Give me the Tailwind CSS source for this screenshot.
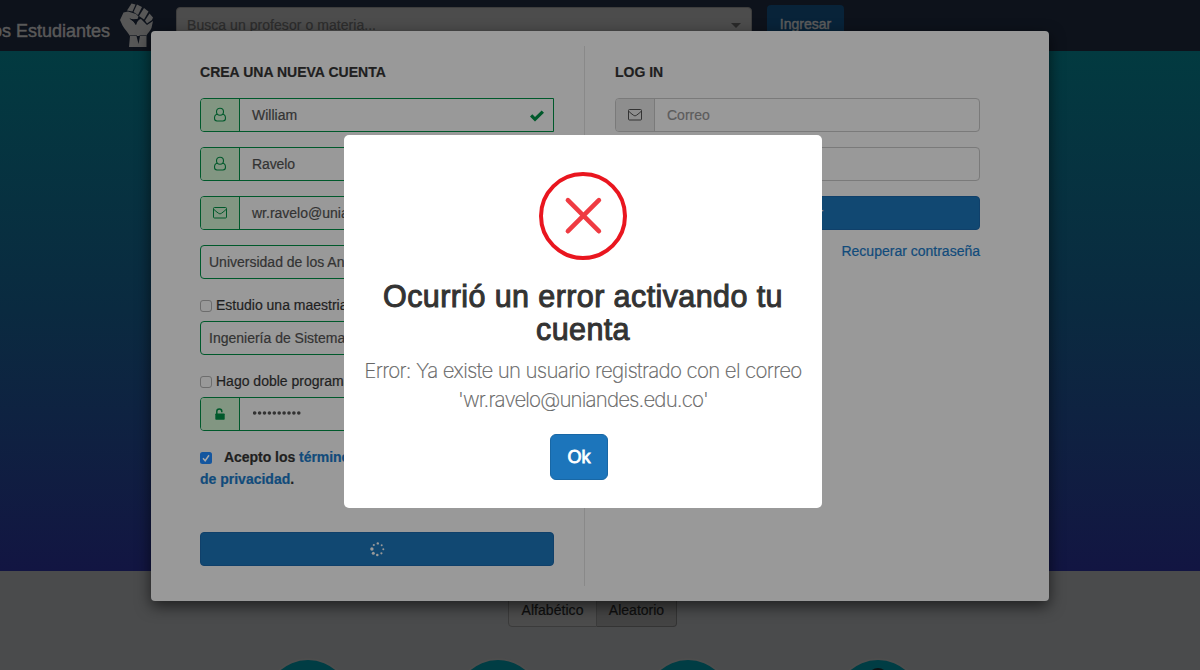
<!DOCTYPE html>
<html lang="es">
<head>
<meta charset="utf-8">
<title>Los Estudiantes</title>
<script src="https://cdn.jsdelivr.net/npm/@tailwindcss/browser@4"></script>
</head>
<body class="relative h-[670px] w-[1200px] overflow-hidden bg-[#4a4b4c] font-['Liberation_Sans',Arial,sans-serif] text-sm leading-5 text-[#1f1f1f] [-webkit-text-stroke:.2px]">

<svg class="hidden">
  <symbol id="user" viewBox="0 0 14 16"><path d="M4.300 7.300C2 7.600 1.500 9.400 1.500 11.300c0 1.700 1 2.700 2.500 2.700h6c1.500 0 2.500-1 2.500-2.700 0-1.900-.5-3.700-2.800-4" fill="none" stroke="currentColor" stroke-width="1.100"/><circle cx="7" cy="4.700" r="3.500" fill="none" stroke="currentColor" stroke-width="1.100"/></symbol>
  <symbol id="mail" viewBox="0 0 14 12"><rect x=".5" y=".5" width="13" height="10.500" rx="1" fill="none" stroke="currentColor"/><path d="M.8 2.300c1.400 1.500 2.900 2.600 4.500 3.800 1.100.9 2.300.9 3.400 0 1.600-1.200 3.100-2.300 4.500-3.800" fill="none" stroke="currentColor"/></symbol>
</svg>

<!-- Page behind the dialogs -->
<header class="flex h-[51px] items-start bg-[#0d121b]">
  <div class="flex w-[110px] justify-end pt-[19px]"><span class="whitespace-nowrap text-lg leading-6 text-[#595959] [-webkit-text-stroke:.5px]">Los Estudiantes</span></div>
  <svg class="ml-[9px] mt-[2px] h-[46px] w-[36px] shrink-0" viewBox="0 0 36 46" fill="#575757">
    <path d="M12.500 1.500 16.500 2.500 13.500 9.500 8 8.500Z"/>
    <path d="M18 2.500 23 5 19 13 14.500 10Z"/>
    <path d="M25 6 29.500 9.500 25 17.500 20 14Z"/>
    <path d="M30.500 11.500 34 15.500 33 18 28 21.500 26 18.500Z"/>
    <path d="M1 18 4.500 10.500 9 9.500 17 12 19.500 14.500 18.500 17 14.500 17.500 10.500 16.500 14.500 19.500 17 23C18 19.500 20 17 22 17L28 23 34 19 32.500 26C31.500 29 28.500 31 27.500 33.500V45H10L11 34C9 30.500 5.500 27 3.500 23.500Z"/>
    <path d="M10.500 16.500 14.500 17.500 18.500 17C17 19 17.500 21 17 23L14.500 19.500Z" fill="#0d121b"/>
    <path d="M11 33.500H18M20.500 33.500H27.500" stroke="#0d121b" stroke-width=".6"/>
    <path d="M17.500 34H21L19.500 42Z" fill="#0d121b"/>
  </svg>
  <div class="ml-[21px] mt-[7px] flex h-[34px] w-[576px] justify-between rounded border border-[#3d3d3d] bg-[#4c4c4c] px-[10px] pt-[7px] text-[#2d2d2d]">
    <span class="tracking-[.05px]">Busca un profesor o materia...</span>
    <svg class="mt-[8px] h-[5px] w-[10px]" viewBox="0 0 10 5"><path d="M0 0h10L5 5z" fill="#292929"/></svg>
  </div>
  <div class="ml-[15px] mt-[5px] h-[36px] w-[77px] rounded bg-[#082339] pt-[9px] text-center text-[#5c5c5c] [-webkit-text-stroke:.5px]">Ingresar</div>
</header>
<div class="h-[520px] bg-linear-to-b from-[#023a40] via-[#0a2a40] to-[#121542]"></div>
<div class="flex h-[56px] justify-center pr-[15px] pt-[22px] text-[#0f0f0f]">
  <div class="h-[34px] w-[89px] rounded-l border border-[#3b3b3b] bg-[#4c4c4c] pt-[6px] text-center tracking-[.05px]">Alfabético</div>
  <div class="h-[34px] w-[80px] rounded-r border border-l-0 border-[#343434] bg-[#444] pt-[6px] text-center">Aleatorio</div>
</div>
<div class="flex h-[43px] gap-[106px] overflow-hidden pl-[266px] pt-[33px]">
  <div class="size-[84px] shrink-0 rounded-full bg-[#003d44] shadow-[0_0_0_2px_#4d4d4d]"></div>
  <div class="size-[84px] shrink-0 rounded-full bg-[#003d44] shadow-[0_0_0_2px_#4d4d4d]"></div>
  <div class="size-[84px] shrink-0 rounded-full bg-[#003d44] shadow-[0_0_0_2px_#4d4d4d]"></div>
  <div class="flex size-[84px] shrink-0 justify-center rounded-full bg-[#003d44] pt-[8px] shadow-[0_0_0_2px_#4d4d4d]"><div class="h-6 w-5 rounded-full bg-[#0c1213]"></div></div>
</div>

<!-- Account dialog -->
<main class="absolute left-[151px] top-[31px] flex h-[570px] w-[898px] rounded bg-[#999] shadow-[0_5px_15px_rgba(0,0,0,.6)]">
  <section class="w-[403px] pl-[49px] pt-[31px]">
    <h2 class="font-bold tracking-[.02px]">CREA UNA NUEVA CUENTA</h2>
    <div class="mt-[16px] flex h-[34px] overflow-hidden rounded-l border border-[#00592b]">
      <div class="flex w-[39px] items-center justify-center border-r border-[#00592b] bg-[#829682] text-[#00592b]"><svg class="h-4 w-[14px]"><use href="#user"/></svg></div>
      <div class="flex flex-1 items-center justify-between pl-3 pr-[9px] text-[#333]">William<svg class="mt-px h-3 w-[14px]" viewBox="0 0 14 12"><path d="M0 6.500 2.300 4.300 5 7 11.700.4 14 2.700 5 11.500z" fill="#00592b"/></svg></div>
    </div>
    <div class="mt-[15px] flex h-[34px] overflow-hidden rounded-l border border-[#00592b]">
      <div class="flex w-[39px] items-center justify-center border-r border-[#00592b] bg-[#829682] text-[#00592b]"><svg class="h-4 w-[14px]"><use href="#user"/></svg></div>
      <div class="flex items-center pl-3 tracking-[-.1px] text-[#333]">Ravelo</div>
    </div>
    <div class="mt-[15px] flex h-[34px] overflow-hidden rounded-l border border-[#00592b]">
      <div class="flex w-[39px] items-center justify-center border-r border-[#00592b] bg-[#829682] text-[#00592b]"><svg class="h-3 w-[14px]"><use href="#mail"/></svg></div>
      <div class="flex items-center pl-3 text-[#333]">wr.ravelo@uniandes.edu.co</div>
    </div>
    <div class="mt-[15px] flex h-[34px] items-center rounded border border-[#00592b] pl-2 text-[#333]">Universidad de los Andes</div>
    <div class="mt-[16px] flex h-5 items-center text-[#1f1f1f]"><span class="mr-1 mt-[2px] size-3 rounded-[3px] border border-[#6d6d6d]"></span>Estudio una maestria</div>
    <div class="mt-[6px] flex h-[34px] items-center rounded border border-[#00592b] pl-2 text-[#333]">Ingeniería de Sistemas</div>
    <div class="mt-[16px] flex h-5 items-center text-[#1f1f1f]"><span class="mr-1 mt-[2px] size-3 rounded-[3px] border border-[#6d6d6d]"></span>Hago doble programa</div>
    <div class="mt-[6px] flex h-[34px] overflow-hidden rounded-l border border-[#00592b]">
      <div class="flex w-[39px] items-center justify-center border-r border-[#00592b] bg-[#829682]"><svg class="-mt-px h-3 w-[10px]" viewBox="0 0 10 12"><rect y="5.500" x=".3" width="9.400" height="6.300" rx=".7" fill="#00592b"/><path d="M1.800 6V3.400a2.500 2.500 0 0 1 5 0V4.200" fill="none" stroke="#00592b" stroke-width="1.500"/></svg></div>
      <div class="flex items-center pl-[13px]"><svg class="-mt-[2px] h-1 w-12" viewBox="0 0 48 4"><path d="M1.700 2h47" stroke="#333" stroke-width="3.600" stroke-linecap="round" stroke-dasharray="0 4.900"/></svg></div>
    </div>
    <div class="mt-[15px] h-[44px] whitespace-nowrap font-bold leading-[22px]">
      <div class="flex items-center tracking-[-.04px]"><svg class="mr-[12px] mt-[2px] size-3" viewBox="0 0 12 12"><rect width="12" height="12" rx="2.500" fill="#14569f"/><path d="m3 6.200 2.200 2.500L9 3.300" fill="none" stroke="#aaa" stroke-width="1.500"/></svg>Acepto los&nbsp;<span class="text-[#114b7b]">términos y políticas</span></div>
      <div><span class="text-[#114b7b]">de privacidad</span>.</div>
    </div>
    <div class="mt-[42px] flex h-[34px] items-center justify-center rounded border border-[#10406a] bg-[#114872]">
      <svg class="size-[15px]" viewBox="0 0 15 15" fill="#999"><circle cx="7.800" cy="1.400" r="1.200"/><circle cx="11.700" cy="3.300" r="1"/><circle cx="13.300" cy="7.300" r="1"/><circle cx="11.400" cy="11.300" r="1.100"/><circle cx="7.300" cy="13" r="1.300"/><circle cx="3.300" cy="11.200" r="1.500"/><circle cx="1.900" cy="7" r="1.700"/><circle cx="3.800" cy="3" r="1.100"/></svg>
    </div>
  </section>
  <div class="ml-[30px] mt-[15px] h-[540px] w-px bg-[#898989]"></div>
  <section class="ml-[30px] w-[365px] pt-[31px]">
    <h2 class="font-bold">LOG IN</h2>
    <div class="mt-[16px] flex h-[34px] overflow-hidden rounded border border-[#7a7a7a]">
      <div class="flex w-[39px] items-center justify-center border-r border-[#7a7a7a] bg-[#8e8e8e] text-[#333]"><svg class="h-3 w-[14px]"><use href="#mail"/></svg></div>
      <div class="flex items-center pl-3 text-[#5c5c5c]">Correo</div>
    </div>
    <div class="mt-[15px] h-[34px] rounded border border-[#7a7a7a]"></div>
    <div class="mt-[15px] flex h-[34px] items-center justify-center rounded border border-[#10406a] bg-[#114872] text-[#999]">Ingresar</div>
    <div class="mt-[11px] text-right text-[#114b7b]">Recuperar contraseña</div>
  </section>
</main>

<!-- Error alert -->
<div class="absolute left-[344px] top-[135px] flex h-[373px] w-[478px] flex-col items-center rounded-[5px] bg-white pt-[37px]">
  <svg class="size-[88px]" viewBox="0 0 88 88" fill="none"><circle cx="44" cy="44" r="42" stroke="#e9161f" stroke-width="4"/><path d="m28.900 28.200 31 31m0-31-31 31" stroke="#ef3b42" stroke-width="4.600" stroke-linecap="round"/></svg>
  <h1 class="mt-[20px] whitespace-nowrap text-center text-[30.500px] leading-[33px] tracking-[.4px] text-[#333] [-webkit-text-stroke:1px]">Ocurrió un error activando tu<br>cuenta</h1>
  <p class="mt-[10px] whitespace-nowrap text-center font-[Inter,sans-serif] text-[20.5px] font-extralight leading-[29px] tracking-[-.68px] text-[#666]">Error: Ya existe un usuario registrado con el correo<br><span class="tracking-[-.85px]">'wr.ravelo@uniandes.edu.co'</span></p>
  <button class="mr-[8px] mt-[20px] h-[46px] w-[58px] rounded-md border border-[#1867a5] bg-[#1c75bb] text-lg text-white [-webkit-text-stroke:.8px]">Ok</button>
</div>
</body>
</html>
